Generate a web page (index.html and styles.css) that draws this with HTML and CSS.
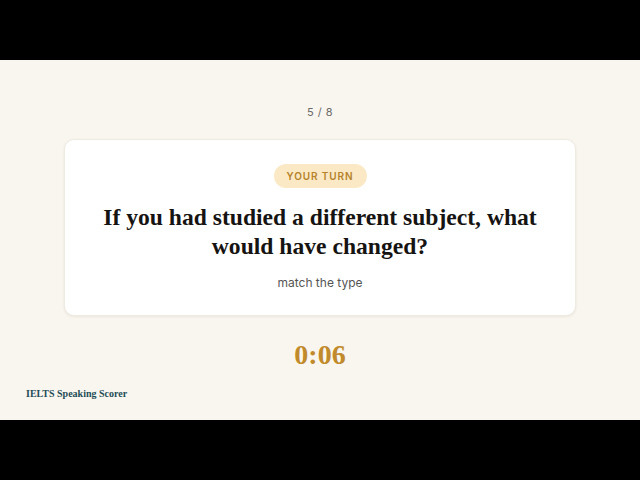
FILE: index.html
```html
<!DOCTYPE html>
<html lang="en">
<head>
<meta charset="utf-8">
<title>IELTS Speaking Scorer</title>
<link rel="stylesheet" href="styles.css">
</head>
<body>
<div class="bar"></div>
<main class="stage">
  <div class="counter">5 / 8</div>
  <section class="card">
    <span class="pill">YOUR TURN</span>
    <h1 class="question">If you had studied a different subject, what would have changed?</h1>
    <p class="hint">match the type</p>
  </section>
  <div class="timer">0:06</div>
  <div class="brand">IELTS Speaking Scorer</div>
</main>
<div class="bar"></div>
</body>
</html>
```

FILE: styles.css
```css
html, body {
  margin: 0;
  padding: 0;
  background: #000;
  width: 640px;
  height: 480px;
  overflow: hidden;
}
.bar {
  height: 60px;
  background: #000;
}
.stage {
  height: 360px;
  box-sizing: border-box;
  background: #f9f6ef;
  display: flex;
  flex-direction: column;
  align-items: center;
  padding-top: 45px;
}
.counter {
  font-family: "Inter", "Liberation Sans", sans-serif;
  font-size: 11px;
  line-height: 14px;
  color: #6b6b6b;
  letter-spacing: 0.5px;
  margin-bottom: 20px;
}
.card {
  width: 512px;
  height: 177px;
  box-sizing: border-box;
  background: #fff;
  border: 1px solid #efebe2;
  border-radius: 10px;
  box-shadow: 0 1px 3px rgba(60, 50, 30, 0.08);
  display: flex;
  flex-direction: column;
  align-items: center;
  padding-top: 24px;
}
.pill {
  display: inline-block;
  height: 24px;
  line-height: 24px;
  padding: 0 13px;
  border-radius: 12px;
  background: #fbe9c6;
  color: #b5832a;
  font-family: "Inter", "Liberation Sans", sans-serif;
  font-size: 10px;
  font-weight: 600;
  letter-spacing: 0.9px;
}
.question {
  margin: 15px 0 0;
  width: 460px;
  text-align: center;
  font-family: "Liberation Serif", serif;
  font-weight: 700;
  font-size: 23.6px;
  line-height: 29px;
  color: #161412;
}
.hint {
  margin: 14px 0 0;
  font-family: "Inter", "Liberation Sans", sans-serif;
  font-size: 12px;
  line-height: 16px;
  color: #555;
}
.timer {
  margin-top: 23px;
  font-family: "Liberation Serif", serif;
  font-weight: 700;
  font-size: 28px;
  line-height: 32px;
  color: #c18a2b;
}
.brand {
  align-self: flex-start;
  margin: 16px 0 0 26px;
  font-family: "Liberation Serif", serif;
  font-weight: 700;
  font-size: 10px;
  line-height: 14px;
  color: #1f4d57;
}
```
